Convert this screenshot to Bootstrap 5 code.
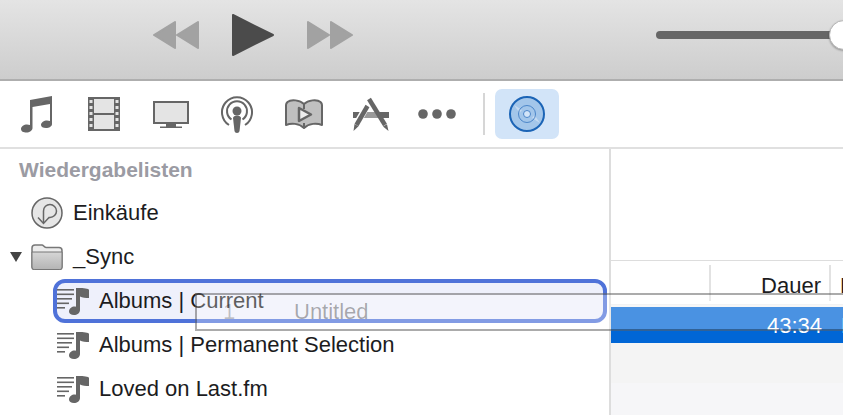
<!DOCTYPE html>
<html lang="de">
<head>
<meta charset="utf-8">
<title>iTunes</title>
<link href="https://cdn.jsdelivr.net/npm/bootstrap@5.3.0/dist/css/bootstrap.min.css" rel="stylesheet">
<style>
html,body{height:100%}
body{width:843px;height:415px;overflow:hidden;background:#fff;font-family:"Liberation Sans",Arial,sans-serif;font-size:22px;line-height:33px;color:#1c1c1e;position:relative}
.top-bar{height:81px;background:linear-gradient(#e4e4e4,#cdcdcd);border-bottom:2px solid #aeaeae;padding-left:153px;padding-bottom:9px;overflow:hidden}
.top-bar svg{display:block;flex-shrink:0}
.play-gap{margin-left:33px}
.next-gap{margin-left:33px}
.vol-track{width:190px;height:8px;border-radius:4px;background:#666;margin-left:303px;position:relative}
.vol-knob{position:absolute;left:173px;top:-11px;width:30px;height:30px;border-radius:50%;background:#fff;border:1px solid #b5b5b5;box-shadow:0 1px 2px rgba(0,0,0,.3)}
.tool-bar{height:68px;border-bottom:2px solid #e0e0e0;padding-left:4px}
.tool-slot{width:66.7px}
.tool-sep{width:2px;height:42px;background:#d6d6d6;margin-left:12px;margin-right:10px}
.tool-active{width:64px;height:50px;border-radius:7px;background:#d2e4f8}
.main-area{height:266px}
.side-pane{width:611px;border-right:2px solid #ddd;overflow:hidden}
.side-head{height:42px;padding-left:19px;font-weight:700;font-size:21px;color:#9b9ba3;padding-top:8px;line-height:26px}
.side-row{height:44px;white-space:nowrap}
.indent-1{padding-left:31px}
.twist{width:0;height:0;border-left:6px solid transparent;border-right:6px solid transparent;border-top:10px solid #444;margin-left:10px;margin-right:9px}
.indent-2{padding-left:4px;margin-left:53px;margin-right:2px}
.focus-row{height:44px;border:4px solid #4f72d9;border-radius:12px;background:#eef0fb;padding-left:0;white-space:nowrap}
.side-label-1{margin-left:10px;margin-bottom:2px}
.side-label-2{margin-left:10px;margin-bottom:2px}
.list-pane{flex:1;min-width:0;overflow:hidden;background:#fff}
.list-gap{height:111px}
.col-head{height:45px;border-top:1px solid #ddd;border-bottom:1px solid #eee;padding-top:4px}
.col-a{width:98px}
.col-b{width:120px;border-left:2px solid #e2e2e2;height:36px;padding-right:8px;padding-top:4px}
.col-c{border-left:2px solid #e2e2e2;height:36px;padding-left:9px;padding-top:4px}
.sel-gap{height:2px;background:#f4f4f4}
.sel-row{height:36px;background:#0066d6;color:#fff}
.sel-time{width:219px;padding-right:8px;padding-top:2px}
.sel-next{padding-top:2px;padding-left:11px}
.rest-row-a{height:40px;background:#f4f4f4}
.rest-row-b{height:32px;background:#f6f6f8}
.drag-ghost{position:absolute;left:195px;top:293px;width:660px;height:38px;border:2px solid rgba(0,0,0,.33);background:rgba(255,255,255,.29);color:rgba(0,0,0,.33);white-space:nowrap;pointer-events:none}
.ghost-num{left:26px;top:0;position:absolute;color:rgba(0,0,0,.22)}
.ghost-title{left:97px;top:0;position:absolute}
</style>
</head>
<body>
<div class="top-bar d-flex align-items-center">
  <svg width="46" height="30" viewBox="0 0 46 30"><path fill="#a2a2a2" stroke="#a2a2a2" stroke-width="2" stroke-linejoin="round" d="M22 2 1 15l21 13zM45 2 24 15l21 13z"/></svg>
  <svg class="play-gap" width="42" height="42" viewBox="0 0 42 42"><path fill="#4b4b4b" stroke="#4b4b4b" stroke-width="2" stroke-linejoin="round" d="M1 1v40l40-20z"/></svg>
  <svg class="next-gap" width="46" height="30" viewBox="0 0 46 30"><path fill="#a2a2a2" stroke="#a2a2a2" stroke-width="2" stroke-linejoin="round" d="M1 2l21 13L1 28zM24 2l21 13-21 13z"/></svg>
  <div class="vol-track flex-shrink-0"><div class="vol-knob"></div></div>
</div>
<div class="tool-bar d-flex align-items-center">
  <div class="tool-slot d-flex justify-content-center">
    <svg width="32" height="37" viewBox="0 0 32 37"><path fill="#666" d="M9 4 31 0v28c0 2.500-3 4-6 4-3 0-5-1-5-3 0-2.500 3-4.500 6-4.500 1 0 2 .2 3 .5V8L11.500 11v21c0 2.500-3 4.500-6 4.500-3 0-5.500-1-5.500-3.500 0-2.500 3-4.500 6-4.500 1 0 2 .2 3 .5z"/></svg>
  </div>
  <div class="tool-slot d-flex justify-content-center">
    <svg width="32" height="34" viewBox="0 0 32 34"><rect width="32" height="34" fill="#666"/><rect x="6" y="2" width="20" height="14" fill="#e4e4e4"/><rect x="6" y="18" width="20" height="14" fill="#e4e4e4"/><g fill="#e4e4e4"><rect x="1.500" y="3" width="3" height="3"/><rect x="1.500" y="9" width="3" height="3"/><rect x="1.500" y="15" width="3" height="3"/><rect x="1.500" y="21" width="3" height="3"/><rect x="1.500" y="27" width="3" height="3"/><rect x="27.500" y="3" width="3" height="3"/><rect x="27.500" y="9" width="3" height="3"/><rect x="27.500" y="15" width="3" height="3"/><rect x="27.500" y="21" width="3" height="3"/><rect x="27.500" y="27" width="3" height="3"/></g></svg>
  </div>
  <div class="tool-slot d-flex justify-content-center">
    <svg width="36" height="27" viewBox="0 0 36 27"><rect x="1" y="1" width="34" height="21" fill="#e4e4e4" stroke="#666" stroke-width="2"/><path fill="#666" d="M13 23h10v2.500h6V27H7v-1.500h6z"/></svg>
  </div>
  <div class="tool-slot d-flex justify-content-center">
    <svg width="32" height="37" viewBox="0 0 32 37"><g fill="none" stroke="#666" stroke-width="2"><path d="M8 29A15 15 0 1 1 24 29"/><path d="M10.500 23.500A10 10 0 1 1 21.500 23.500"/></g><circle cx="16" cy="15" r="4.500" fill="#666"/><path fill="#666" d="M12 22c0-1.500 2-2.500 4-2.500s4 1 4 2.500l-1.500 13c-.2 1.300-1.200 2-2.500 2s-2.300-.7-2.500-2z"/></svg>
  </div>
  <div class="tool-slot d-flex justify-content-center">
    <svg width="38" height="30" viewBox="0 0 38 30"><path fill="#c0c0c0" stroke="#666" stroke-width="2" stroke-linejoin="round" d="M19 5C15 1 6 0 2.500 3 1.500 4 1 5 1 6v20c5-2 13-2 18 3 5-5 13-5 18-3V6c0-1-.5-2-1.500-3C32 0 23 1 19 5z"/><path fill="none" stroke="#666" stroke-width="2" d="M19 5v5M19 24v5"/><path fill="#eee" stroke="#666" stroke-width="2.500" stroke-linejoin="round" d="M14 9l12 6.500L14 22z"/></svg>
  </div>
  <div class="tool-slot d-flex justify-content-center">
    <svg width="36" height="34" viewBox="0 0 36 34"><path fill="#666" d="M0 15h36v6H0z"/><path fill="#9a9a9a" d="M13 15h10l3 6H10z"/><g fill="none" stroke="#fff" stroke-width="6.500"><path d="M14 9 3.500 27"/></g><g fill="none" stroke="#666" stroke-width="4.500"><path d="M14.500 9 3.500 28"/><path d="M16 2 32 28"/></g><path fill="#666" d="M0.500 34 1.500 27l4 2.300zM35.500 34 30 29.500l4-2.300z"/></svg>
  </div>
  <div class="tool-slot d-flex justify-content-center">
    <svg width="38" height="10" viewBox="0 0 38 10"><circle cx="5" cy="5" r="4.800" fill="#666"/><circle cx="19" cy="5" r="4.800" fill="#666"/><circle cx="33" cy="5" r="4.800" fill="#666"/></svg>
  </div>
  <div class="tool-sep"></div>
  <div class="tool-active d-flex align-items-center justify-content-center">
    <svg width="36" height="36" viewBox="0 0 36 36"><circle cx="18" cy="18" r="17" fill="#a3c6ea" stroke="#1b64b6" stroke-width="2"/><path fill="#c5daf1" d="M5 9l8 5-2.500 3zM31 27l-8-5 2.500-3z"/><circle cx="18" cy="18" r="8.500" fill="none" stroke="#4c86c9"/><circle cx="18" cy="18" r="3.500" fill="#d2e4f8" stroke="#4c86c9"/></svg>
  </div>
</div>
<div class="main-area d-flex">
  <div class="side-pane flex-shrink-0">
    <div class="side-head">Wiedergabelisten</div>
    <div class="side-row indent-1 d-flex align-items-center">
      <svg width="32" height="32" viewBox="0 0 32 32"><circle cx="16" cy="16" r="15" fill="#e6e6e6" stroke="#666" stroke-width="1.500"/><path fill="none" stroke="#666" stroke-width="1.500" d="M12.500 26V14c0-4 3-6.500 6.500-6.500s6.500 3 6.500 6.500-3 6.500-6.500 6.500h-1.500"/><path fill="none" stroke="#666" stroke-width="1.500" d="M7 20.500l5.500 6 5.500-6"/></svg>
      <span class="side-label-1">Einkäufe</span>
    </div>
    <div class="side-row d-flex align-items-center">
      <span class="twist"></span>
      <svg width="32" height="26" viewBox="0 0 32 26"><defs><linearGradient id="fold" x1="0" y1="0" x2="0" y2="1"><stop offset="0" stop-color="#d6d6d6"/><stop offset="1" stop-color="#b4b4b4"/></linearGradient></defs><path fill="#ececec" stroke="#777" stroke-width="1.500" d="M1 4c0-2 1-3 3-3h7c1.500 0 2 2.500 4 2.500h13c2 0 3 1 3 3V23c0 1.500-1 2.500-2.500 2.500h-25C2 25.500 1 24.500 1 23z"/><path fill="url(#fold)" stroke="#777" d="M1 8h30v15c0 1.500-1 2.500-2.500 2.500h-25C2 25.500 1 24.500 1 23z"/></svg>
      <span class="side-label-1">_Sync</span>
    </div>
    <div class="focus-row indent-2 d-flex align-items-center">
      <svg width="32" height="27" viewBox="0 0 32 27"><use href="#pl-icon"/></svg>
      <span class="side-label-2">Albums | Current</span>
    </div>
    <div class="side-row indent-2 d-flex align-items-center">
      <svg width="32" height="27" viewBox="0 0 32 27"><use href="#pl-icon"/></svg>
      <span class="side-label-2">Albums | Permanent Selection</span>
    </div>
    <div class="side-row indent-2 d-flex align-items-center">
      <svg width="32" height="27" viewBox="0 0 32 27"><use href="#pl-icon"/></svg>
      <span class="side-label-2">Loved on Last.fm</span>
    </div>
  </div>
  <div class="list-pane">
    <div class="list-gap"></div>
    <div class="col-head d-flex align-items-start">
      <div class="col-a flex-shrink-0"></div>
      <div class="col-b flex-shrink-0 text-end">Dauer</div>
      <div class="col-c flex-shrink-0">K</div>
    </div>
    <div class="sel-gap"></div>
    <div class="sel-row d-flex">
      <div class="sel-time flex-shrink-0 text-end">43:34</div>
      <div class="sel-next flex-shrink-0">L</div>
    </div>
    <div class="rest-row-a"></div>
    <div class="rest-row-b"></div>
  </div>
</div>
<div class="drag-ghost"><span class="ghost-num">1</span><span class="ghost-title">Untitled</span></div>
<svg width="0" height="0" class="position-absolute"><defs><g id="pl-icon"><g fill="#666"><rect x="0" y="1" width="17" height="1.600"/><rect x="0" y="5.500" width="17" height="1.600"/><rect x="0" y="10" width="15" height="1.600"/><rect x="0" y="14.500" width="12" height="1.600"/><rect x="0" y="19" width="8" height="1.600"/><path d="M19 0h3c4 0 10 .5 10 2v8c-3 0-7-.5-9-1.500V22c0 3-3 5-6 5-3 0-5-1.500-5-3.500 0-3 3-5 5.500-5 .5 0 1 .1 1.500.2z"/></g></g></defs></svg>
<script src="https://cdn.jsdelivr.net/npm/bootstrap@5.3.0/dist/js/bootstrap.bundle.min.js"></script>
</body>
</html>
